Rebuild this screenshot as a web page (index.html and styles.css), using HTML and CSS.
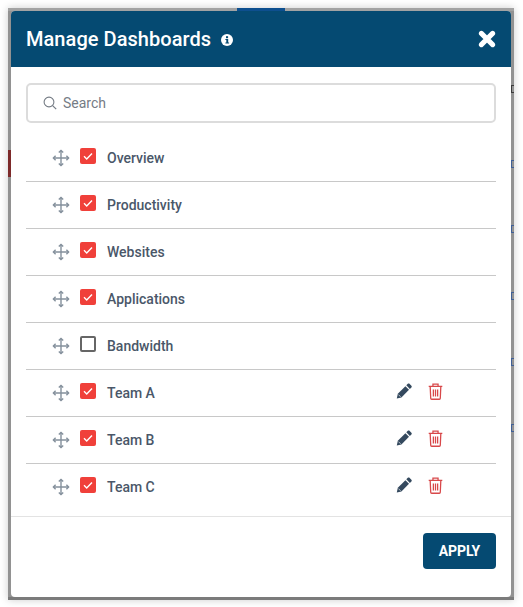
FILE: index.html
```html
<!DOCTYPE html>
<html lang="en">
<head>
    <meta charset="UTF-8">
    <title>Manage Dashboards</title>
    <link rel="stylesheet" href="styles.css">
</head>
<body>
    <div class="backdrop">
        <!-- bits of the page behind the modal -->
        <div class="behind behind-top"></div>
        <div class="behind behind-bottom"></div>
        <div class="behind behind-tab"></div>
        <div class="behind behind-red"></div>
        <div class="behind behind-mark mark-dark"></div>
        <div class="behind behind-mark mark-1"></div>
        <div class="behind behind-mark mark-2"></div>
        <div class="behind behind-mark mark-3"></div>
        <div class="behind behind-mark mark-4"></div>
        <div class="behind behind-mark mark-5"></div>

        <div class="modal">
            <div class="modal-header">
                <h1>Manage Dashboards</h1>
                <svg class="info-icon" viewBox="0 0 12 12">
                    <circle cx="6" cy="6" r="6" fill="#fff"/>
                    <rect x="5" y="2.2" width="2.1" height="2" fill="#054a72"/>
                    <path d="M4.4 5h2.8v3.4h.9v1H4.4v-1h.9V6h-.9z" fill="#054a72"/>
                </svg>
                <svg class="close-icon" viewBox="0 0 16 16">
                    <path d="M3 3l10 10M13 3L3 13" stroke="#fff" stroke-width="4.4" stroke-linecap="round" fill="none"/>
                </svg>
            </div>

            <div class="modal-body">
                <div class="search-box">
                    <svg class="search-icon" viewBox="0 0 14 14">
                        <circle cx="6" cy="6" r="4.9" fill="none" stroke="#757c85" stroke-width="1.1"/>
                        <path d="M9.6 9.6l3.6 3.6" stroke="#757c85" stroke-width="1.2" fill="none"/>
                    </svg>
                    <span class="search-text">Search</span>
                </div>

                <div class="row">
                    <svg class="move-icon" viewBox="0 0 18 18"><use href="#move"/></svg>
                    <span class="check on"><svg viewBox="0 0 16 16"><use href="#tick"/></svg></span>
                    <span class="row-label">Overview</span>
                </div>
                <div class="row">
                    <svg class="move-icon" viewBox="0 0 18 18"><use href="#move"/></svg>
                    <span class="check on"><svg viewBox="0 0 16 16"><use href="#tick"/></svg></span>
                    <span class="row-label">Productivity</span>
                </div>
                <div class="row">
                    <svg class="move-icon" viewBox="0 0 18 18"><use href="#move"/></svg>
                    <span class="check on"><svg viewBox="0 0 16 16"><use href="#tick"/></svg></span>
                    <span class="row-label">Websites</span>
                </div>
                <div class="row">
                    <svg class="move-icon" viewBox="0 0 18 18"><use href="#move"/></svg>
                    <span class="check on"><svg viewBox="0 0 16 16"><use href="#tick"/></svg></span>
                    <span class="row-label">Applications</span>
                </div>
                <div class="row">
                    <svg class="move-icon" viewBox="0 0 18 18"><use href="#move"/></svg>
                    <span class="check"></span>
                    <span class="row-label">Bandwidth</span>
                </div>
                <div class="row">
                    <svg class="move-icon" viewBox="0 0 18 18"><use href="#move"/></svg>
                    <span class="check on"><svg viewBox="0 0 16 16"><use href="#tick"/></svg></span>
                    <span class="row-label">Team A</span>
                    <svg class="edit-icon" viewBox="0 0 16 16"><use href="#pencil"/></svg>
                    <svg class="trash-icon" viewBox="0 0 14 16"><use href="#trash"/></svg>
                </div>
                <div class="row">
                    <svg class="move-icon" viewBox="0 0 18 18"><use href="#move"/></svg>
                    <span class="check on"><svg viewBox="0 0 16 16"><use href="#tick"/></svg></span>
                    <span class="row-label">Team B</span>
                    <svg class="edit-icon" viewBox="0 0 16 16"><use href="#pencil"/></svg>
                    <svg class="trash-icon" viewBox="0 0 14 16"><use href="#trash"/></svg>
                </div>
                <div class="row last">
                    <svg class="move-icon" viewBox="0 0 18 18"><use href="#move"/></svg>
                    <span class="check on"><svg viewBox="0 0 16 16"><use href="#tick"/></svg></span>
                    <span class="row-label">Team C</span>
                    <svg class="edit-icon" viewBox="0 0 16 16"><use href="#pencil"/></svg>
                    <svg class="trash-icon" viewBox="0 0 14 16"><use href="#trash"/></svg>
                </div>
            </div>

            <div class="modal-footer">
                <button class="apply-btn">APPLY</button>
            </div>
        </div>
    </div>

    <!-- shared icon shapes -->
    <svg class="icon-defs">
        <defs>
            <g id="move" fill="none" stroke="#84909c" stroke-width="1.4">
                <path d="M9 1.5v15M1.5 9h15"/>
                <path d="M6.8 3.6L9 1.4l2.2 2.2M6.8 14.4L9 16.6l2.2-2.2M3.6 6.8L1.4 9l2.2 2.2M14.4 6.8L16.6 9l-2.2 2.2"/>
            </g>
            <path id="tick" d="M4 8.3l2.7 2.6L12 5.4" fill="none" stroke="#fff" stroke-width="1.4"/>
            <g id="pencil" fill="#34495e">
                <path d="M9.4 3.2l3.6 3.6-7.6 7.6-4.6 1.2 1-4.8z"/>
                <path d="M10.3 2.3l1.5-1.5c.5-.5 1.2-.5 1.7 0l1.9 1.9c.5.5.5 1.2 0 1.7l-1.5 1.5z"/>
                <path d="M2.4 11.6l2.2 2.2" fill="none" stroke="#c9d0d8" stroke-width=".9"/>
            </g>
            <g id="trash" fill="none" stroke="#d8484a" stroke-width="1.2">
                <path d="M.6 3.2h12.8M4.6 3V1.1h4.8V3"/>
                <path d="M2 3.4l.5 11c0 .5.4.9.9.9h7.2c.5 0 .9-.4.9-.9l.5-11"/>
                <path d="M5 6v6.6M7 6v6.6M9 6v6.6"/>
            </g>
        </defs>
    </svg>
</body>
</html>
```

FILE: styles.css
```css
* {
    box-sizing: border-box;
}

body {
    font-family: Roboto, Arial, sans-serif;
    background-color: #fff;
    margin: 0;
    padding: 8px 9px 7px 8px;
}

.backdrop {
    position: relative;
    width: 506px;
    height: 592px;
    padding: 3px;
    background-color: #929292;
    box-shadow: 0 0 8px rgba(0, 0, 0, 0.2);
    overflow: hidden;
}

.behind {
    position: absolute;
}

.behind-top {
    top: 0;
    left: 0;
    width: 100%;
    height: 3px;
    background-color: #a3a3a3;
}

.behind-bottom {
    bottom: 0;
    left: 0;
    width: 100%;
    height: 3px;
    background-color: #7b7b7b;
}

.behind-tab {
    top: 0;
    left: 229px;
    width: 48px;
    height: 3px;
    background-color: #0d4f8f;
}

.behind-red {
    top: 142px;
    left: 0;
    width: 3px;
    height: 27px;
    background-color: #7d2a2a;
}

.behind-mark {
    left: 503px;
    width: 3px;
    height: 8px;
    border: 1px solid #3f5f96;
    border-right: none;
}

.mark-dark {
    top: 77px;
    border-color: #3a3a3a;
}

.mark-1 { top: 152px; }
.mark-2 { top: 217px; }
.mark-3 { top: 284px; }
.mark-4 { top: 350px; }
.mark-5 { top: 416px; }

.modal {
    position: relative;
    height: 586px;
    background-color: #fff;
    border-radius: 4px;
    overflow: hidden;
    display: flex;
    flex-direction: column;
}

.modal-header {
    height: 56px;
    flex: none;
    background-color: #054a72;
    display: flex;
    align-items: center;
    padding: 0 15px;
    color: #fff;
}

.modal-header h1 {
    margin: 0;
    font-size: 20px;
    font-weight: 500;
    letter-spacing: 0.05px;
}

.info-icon {
    width: 12px;
    height: 12px;
    margin-left: 10px;
    margin-top: 2px;
}

.close-icon {
    width: 18px;
    height: 18px;
    margin-left: auto;
}

.modal-body {
    flex: 1;
    padding: 16px 15px 0;
}

.search-box {
    height: 40px;
    border: 2px solid #dcdcdc;
    border-radius: 5px;
    display: flex;
    align-items: center;
    padding-left: 15px;
    margin-bottom: 12px;
}

.search-icon {
    width: 14px;
    height: 14px;
}

.search-text {
    margin-left: 6px;
    font-size: 14px;
    color: #757c85;
}

.row {
    height: 47px;
    display: flex;
    align-items: center;
    padding: 0 0 0 26px;
    border-bottom: 1px solid #c8c8c8;
}

.row.last {
    border-bottom-color: transparent;
}

.move-icon {
    width: 18px;
    height: 18px;
    flex: none;
}

.check {
    width: 16px;
    height: 16px;
    margin-left: 10px;
    margin-top: -4px;
    border: 2px solid #666;
    border-radius: 2px;
    flex: none;
}

.check.on {
    border: none;
    background-color: #f0403a;
}

.check svg {
    display: block;
    width: 16px;
    height: 16px;
}

.row-label {
    margin-left: 11px;
    font-size: 14px;
    font-weight: 500;
    color: #4a5769;
}

.edit-icon {
    width: 16px;
    height: 16px;
    margin-left: auto;
    margin-right: 16px;
    margin-top: -4px;
}

.trash-icon {
    width: 15px;
    height: 17px;
    margin-right: 53px;
    margin-top: -3px;
}

.modal-footer {
    height: 81px;
    flex: none;
    border-top: 1px solid #e3e3e3;
    display: flex;
    justify-content: flex-end;
    padding: 16px 15px 0 0;
}

.apply-btn {
    width: 73px;
    height: 36px;
    background-color: #054a72;
    color: #fff;
    border: none;
    border-radius: 4px;
    font-family: Roboto, Arial, sans-serif;
    font-size: 14px;
    font-weight: 700;
    letter-spacing: -0.1px;
    padding: 0;
}

.icon-defs {
    position: absolute;
    width: 0;
    height: 0;
}
```
